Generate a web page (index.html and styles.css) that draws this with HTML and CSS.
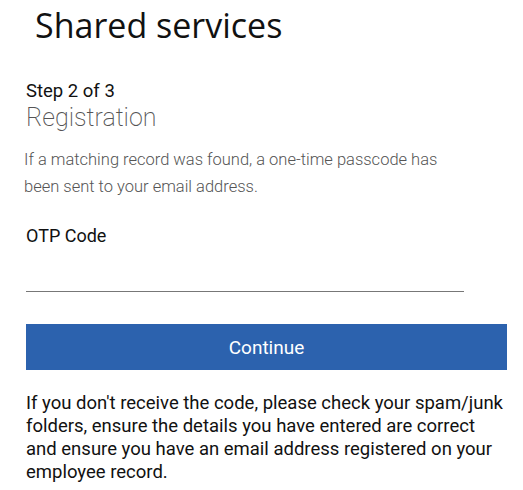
FILE: index.html
```html
<!DOCTYPE html>
<html lang="en">
<head>
<meta charset="utf-8">
<title>Shared services</title>
<link rel="stylesheet" href="styles.css">
</head>
<body>
<main class="page">
  <h1 class="title">Shared services</h1>
  <div class="step">Step 2 of 3</div>
  <h2 class="subtitle">Registration</h2>
  <p class="info">If a matching record was found, a one-time passcode has been sent to your email address.</p>
  <label class="label" for="otp">OTP Code</label>
  <input class="field" id="otp" type="text">
  <button class="btn" type="button">Continue</button>
  <p class="note">If you don't receive the code, please check your spam/junk folders, ensure the details you have entered are correct and ensure you have an email address registered on your employee record.</p>
</main>
</body>
</html>
```
FILE: styles.css
```css
* { box-sizing: border-box; }
html, body { margin: 0; padding: 0; background: #fff; }
body { font-family: Roboto, "Liberation Sans", sans-serif; color: #000; }
.page {
  display: flex;
  flex-direction: column;
  align-items: flex-start;
  padding: 5px 14px 0 26px;
}
.title {
  margin: 0 0 0 9px;
  font-family: "Open Sans", "Noto Sans", sans-serif;
  font-weight: 400;
  font-size: 34px;
  line-height: 40px;
  color: #111;
}
.step {
  margin-top: 35px;
  font-size: 18.5px;
  line-height: 22px;
  color: #111;
}
.subtitle {
  margin: 1px 0 0;
  font-weight: 200;
  font-size: 25px;
  line-height: 30px;
  color: #555;
}
.info {
  margin: 14px 0 0 -2px;
  width: 440px;
  font-weight: 300;
  font-size: 16.5px;
  line-height: 26.5px;
  color: #555;
}
.label {
  margin-top: 25px;
  font-size: 18px;
  line-height: 22px;
  color: #111;
}
.field {
  margin-top: 0;
  width: 438px;
  height: 45px;
  border: none;
  border-bottom: 1px solid #777;
  outline: none;
  background: transparent;
}
.btn {
  margin-top: 32px;
  width: 481px;
  height: 46px;
  border: none;
  background: #2c62ae;
  color: #fff;
  font-family: Roboto, "Liberation Sans", sans-serif;
  font-size: 19px;
}
.note {
  margin: 22px 0 0;
  width: 483px;
  font-size: 18.5px;
  line-height: 23px;
  color: #111;
}
```
